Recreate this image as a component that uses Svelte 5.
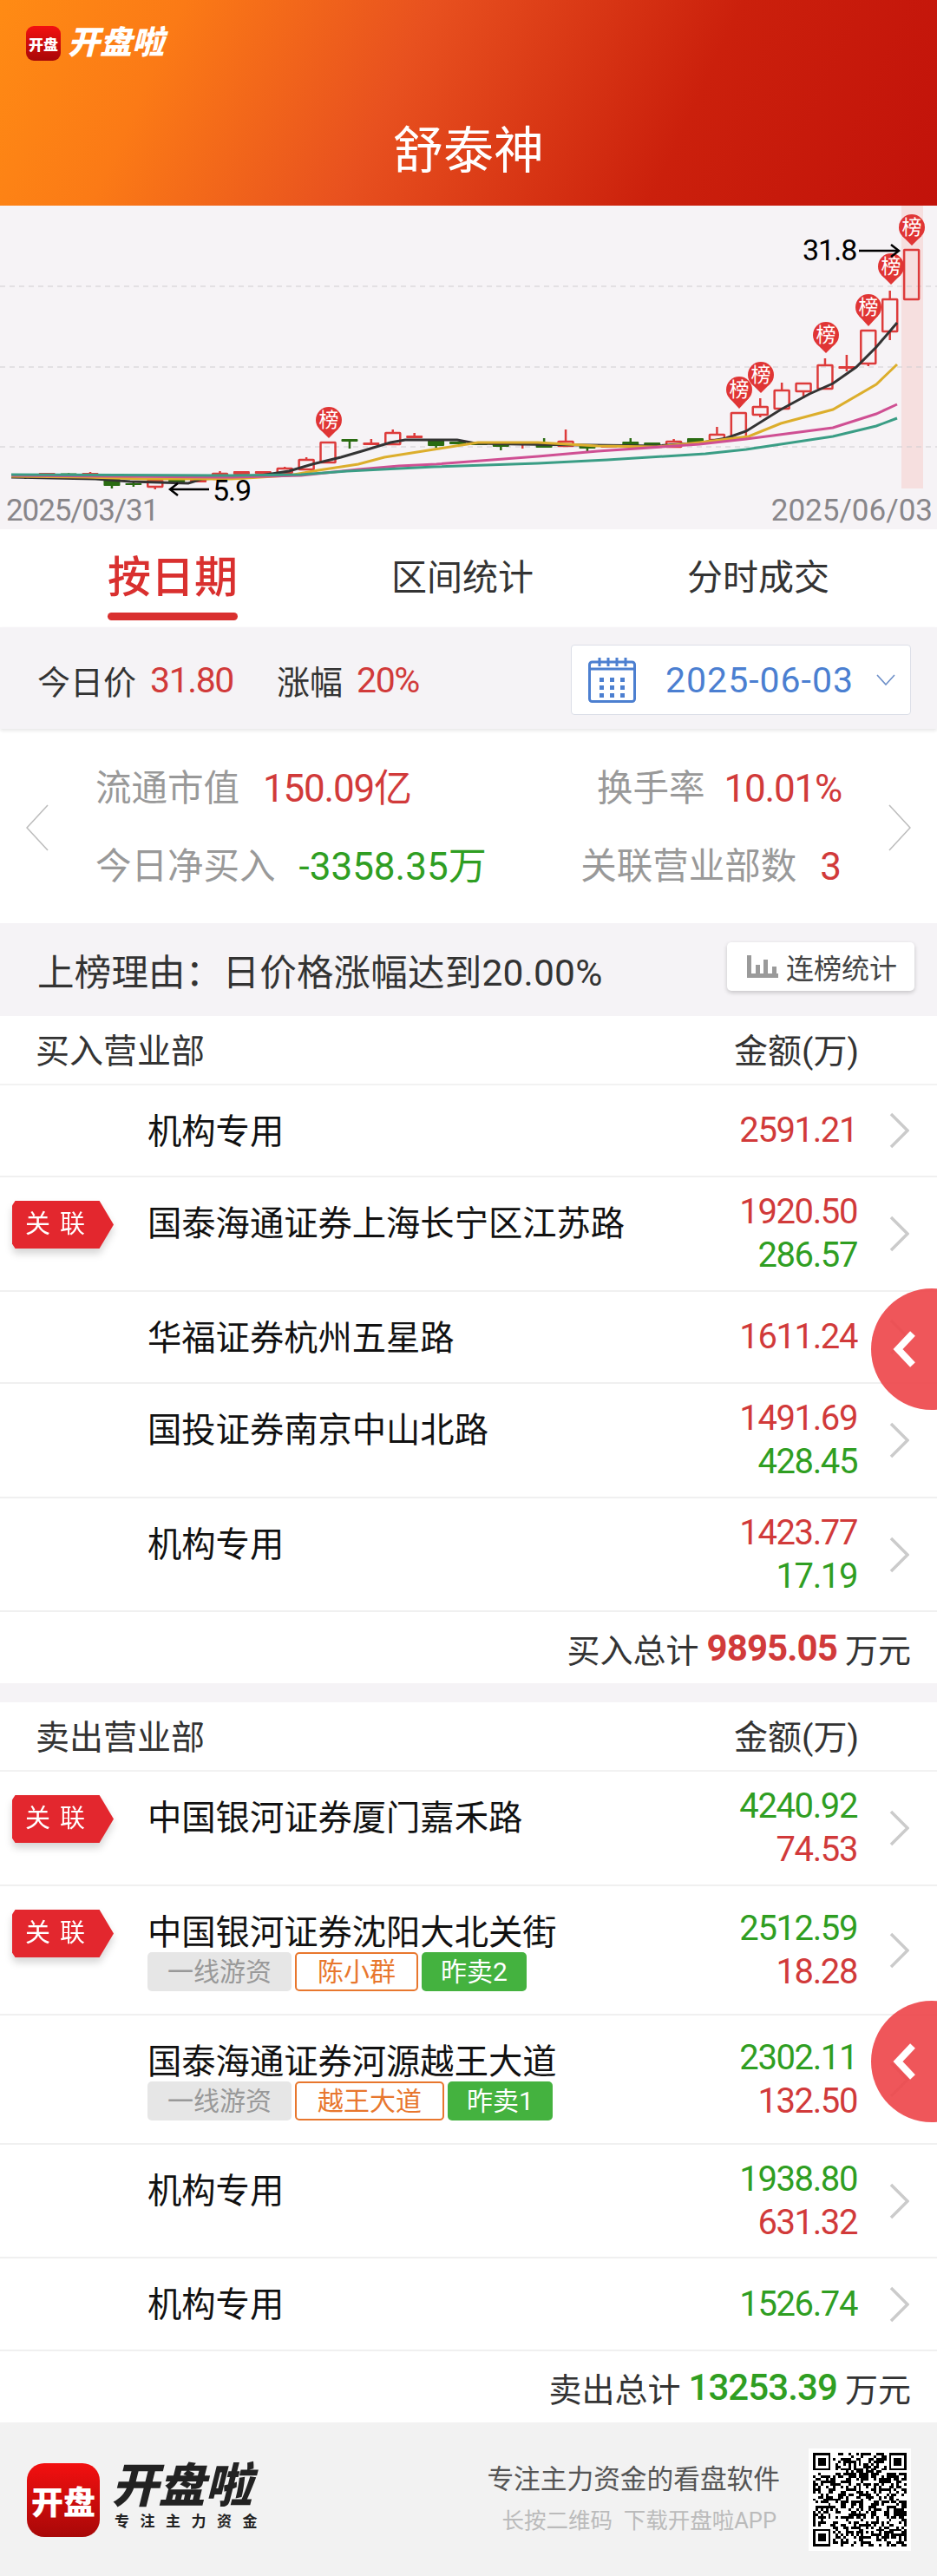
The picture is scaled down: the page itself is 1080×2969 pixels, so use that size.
<script>
  const R = '#dd3b3b', G = '#2a6b12';
  const cx = (n) => 29.3 + 24.91 * n;
  // n, bodyTop, bodyBottom, wickTop, wickBottom, up, hollow
  const candles = [
    [0,549,551,549,552,0,0],[1,545,551,545,551,1,0],[2,545.5,548.5,545,549,0,0],[3,545,550,544,550,1,0],
    [4,550,560,550,563,0,0],[5,557,559,555,561,0,0],[6,554,561,554,564,1,1],[7,552,556,552,556,0,0],
    [8,551,556,551,556,1,0],[9,546,552,543,552,1,1],[10,543,547,543,547,1,0],[11,543,546,543,548,1,0],
    [12,540,545,538,545,1,1],[13,530,541,527,541,1,1],[14,510,533,510,533,1,1],[15,506,509,506,517,0,0],
    [16,510,513,506,513,1,0],[17,499,512,495,512,1,1],[18,502,505,499,505,1,0],[19,507,514,506,516,0,0],
    [20,509,512,509,512,0,0],[21,509,513,509,513,0,0],[22,510,515,510,519,0,0],[23,511,513,511,517,1,0],
    [24,511,516,505,516,0,0],[25,509,514,495,514,1,1],[26,513,517,513,521,0,0],[27,512,516,512,516,1,0],
    [28,509,515,505,515,0,0],[29,510,515,510,515,0,0],[30,509,515,506,515,1,1],[31,505,511,505,513,0,0],
    [32,501,507,492,507,1,1],[33,476,505,476,505,1,1],[34,469,478,459,481,1,1],[35,450,471,441,471,1,1],
    [36,442,451,442,459,1,1],[37,421,448,413,448,1,1],[38,422,425,409,428,1,0],[39,381,419,381,422,1,1],
    [40,345,382,335,392,1,1],[41,288,345,288,345,1,1]
  ];
  const shift = -237;
  const pins = [[1051,262,283],[1027,307,328],[1001,354,376],[952,386,407],[877,432,453],[852,449,471],[379,484,505]];
  const pts = (a) => a.map(([x, y]) => `${x},${y + shift}`).join(' ');
  const black = pts([[13,550],[60,551],[110,552],[150,555],[217,557],[233,552],[300,548],[333,543],[360,535],[393,527],[417,520],[450,510],[467,507],[500,507],[527,507],[548,511],[600,512],[680,513],[757,514],[810,510],[837,505],[860,497],[900,472],[933,454],[960,442],[987,423],[1010,400],[1034,372]]);
  const gold = pts([[13,549],[100,550],[167,552],[267,552],[333,548],[367,542],[413,535],[443,527],[500,518],[551,510],[620,510],[689,514],[757,515],[806,510],[863,503],[900,488],[960,472],[1010,443],[1034,420]]);
  const pink = pts([[13,548],[267,550],[347,548],[413,541],[460,537],[503,535],[620,526],[689,520],[806,512],[860,506],[960,493],[1010,477],[1034,466]]);
  const teal = pts([[13,547],[267,548],[347,547],[400,543],[500,538],[620,534],[700,530],[813,523],[860,518],[960,503],[1010,491],[1034,482]]);

  const buy = [
    { name: '机构专用', h: 106, vals: [['2591.21','r']] },
    { name: '国泰海通证券上海长宁区江苏路', h: 132, rel: true, vals: [['1920.50','r'],['286.57','g']] },
    { name: '华福证券杭州五星路', h: 106, vals: [['1611.24','r']] },
    { name: '国投证券南京中山北路', h: 132, vals: [['1491.69','r'],['428.45','g']] },
    { name: '机构专用', h: 131, vals: [['1423.77','r'],['17.19','g']] }
  ];
  const sell = [
    { name: '中国银河证券厦门嘉禾路', h: 132, rel: true, vals: [['4240.92','g'],['74.53','r']] },
    { name: '中国银河证券沈阳大北关街', h: 149, rel: true, tags: ['陈小群','昨卖2'], vals: [['2512.59','g'],['18.28','r']] },
    { name: '国泰海通证券河源越王大道', h: 149, tags: ['越王大道','昨卖1'], vals: [['2302.11','g'],['132.50','r']] },
    { name: '机构专用', h: 131, vals: [['1938.80','g'],['631.32','r']] },
    { name: '机构专用', h: 107, vals: [['1526.74','g']] }
  ];

  // QR-like module matrix
  const N = 37;
  let seed = 48271;
  const rnd = () => { seed = (seed * 16807) % 2147483647; return seed / 2147483647; };
  let qr = '';
  const finder = (i, j) => {
    const r = N - 7;
    const inBox = (ox, oy) => i >= ox && i < ox + 7 && j >= oy && j < oy + 7;
    for (const [ox, oy] of [[0,0],[r,0],[0,r]]) {
      if (i >= ox - 1 && i <= ox + 7 && j >= oy - 1 && j <= oy + 7) {
        if (!inBox(ox, oy)) return 0;
        const a = i - ox, b = j - oy;
        return (a === 0 || a === 6 || b === 0 || b === 6 || (a >= 2 && a <= 4 && b >= 2 && b <= 4)) ? 1 : 0;
      }
    }
    return -1;
  };
  for (let j = 0; j < N; j++) for (let i = 0; i < N; i++) {
    const f = finder(i, j);
    if (f === 1 || (f === -1 && rnd() > 0.5)) qr += `M${i} ${j}h1v1h-1z`;
  }
</script>

{#snippet row(r)}
  <div class="row" class:two={r.vals.length > 1} style:height="{r.h}px">
    {#if r.rel}<div class="relwrap"><div class="rel">关联</div></div>{/if}
    <div class="main">
      <div class="name">{r.name}</div>
      {#if r.tags}
        <div class="tags">
          <span class="tag gray">一线游资</span>
          <span class="tag orange">{r.tags[0]}</span>
          <span class="tag green">{r.tags[1]}</span>
        </div>
      {/if}
    </div>
    <div class="vals">
      {#each r.vals as v}<div class={v[1]}>{v[0]}</div>{/each}
    </div>
    <svg class="chev" viewBox="0 0 23 42" width="23" height="42"><path d="M2 2 L21 21 L2 40" fill="none" stroke="#cbcbcb" stroke-width="3.5"/></svg>
  </div>
{/snippet}

<div class="page">
  <header class="hero">
    <div class="toplogo">
      <div class="appicon small">开盘</div>
      <div class="wordmark white">开盘啦</div>
    </div>
    <h1>舒泰神</h1>
  </header>

  <svg class="chart" viewBox="0 0 1080 373" width="1080" height="373">
    <rect x="1039" y="0" width="25" height="326" fill="#f6dfdf"/>
    {#each [330,423,515] as y}
      <line x1="0" x2="1080" y1={y+shift} y2={y+shift} stroke="#cfcdd0" stroke-width="1" stroke-dasharray="6 5"/>
    {/each}
    {#each candles as [n,t,b,wt,wb,up,hollow]}
      {@const c = up ? R : G}
      {#if wt < t}<line x1={cx(n)} x2={cx(n)} y1={wt+shift} y2={t+shift} stroke={c} stroke-width="2.5"/>{/if}
      {#if wb > b}<line x1={cx(n)} x2={cx(n)} y1={b+shift} y2={wb+shift} stroke={c} stroke-width="2.5"/>{/if}
      {#if hollow}
        <rect x={cx(n)-8.5} y={t+shift} width="17" height={b-t} fill="none" stroke={c} stroke-width="2.5" rx="0.5"/>
      {:else}
        <rect x={cx(n)-9.5} y={t+shift} width="19" height={b-t} fill={c} rx="1"/>
      {/if}
    {/each}
    <polyline points={black} fill="none" stroke="#333" stroke-width="3"/>
    <polyline points={gold} fill="none" stroke="#dcae2c" stroke-width="3"/>
    <polyline points={pink} fill="none" stroke="#cf4f93" stroke-width="3"/>
    <polyline points={teal} fill="none" stroke="#3a9d85" stroke-width="3"/>
    {#each pins as [x,y,tip]}
      <circle cx={x} cy={y+shift} r="15" fill="#e03535"/>
      <polygon points="{x-11},{y+shift+10} {x},{tip+shift} {x+11},{y+shift+10}" fill="#e03535"/>
      <text x={x} y={y+shift+8} class="pintext" text-anchor="middle">榜</text>
    {/each}
    <text x="925" y={300+shift} class="lbl">31.8</text>
    <g fill="none" stroke="#000" stroke-width="2.5">
      <line x1="990" x2="1035" y1={289+shift} y2={289+shift}/>
      <path d="M1027 {282+shift} L1036 {289+shift} L1027 {296+shift}"/>
      <line x1="197" x2="241" y1={564+shift} y2={564+shift}/>
      <path d="M205 {557+shift} L196 {564+shift} L205 {571+shift}"/>
    </g>
    <text x="245" y={577+shift} class="lbl">5.9</text>
    <text x="7" y={600+shift} class="date narrow">2025/03/31</text>
    <text x="1075" y={600+shift} class="date" text-anchor="end">2025/06/03</text>
  </svg>

  <nav class="tabs">
    <div class="tab active">按日期</div>
    <div class="tab">区间统计</div>
    <div class="tab">分时成交</div>
  </nav>

  <section class="price">
    <span class="pl">今日价</span><span class="pv r">31.80</span>
    <span class="pl second">涨幅</span><span class="pv r">20%</span>
    <div class="datebox">
      <svg viewBox="0 0 55 53" width="55" height="53" fill="none" stroke="#4c7fd0">
        <rect x="1.5" y="6" width="52" height="45.5" rx="3" stroke-width="3"/>
        <line x1="1.5" x2="53.5" y1="14" y2="14" stroke-width="3"/>
        <path d="M13 1v10M23 1v10M33 1v10M43 1v10" stroke-width="3"/>
        <path d="M13 24h5v5h-5zM25 24h5v5h-5zM37 24h5v5h-5zM13 33h5v5h-5zM25 33h5v5h-5zM37 33h5v5h-5zM13 42h5v5h-5zM25 42h5v5h-5zM37 42h5v5h-5z" fill="#4c7fd0" stroke="none"/>
      </svg>
      <span class="dtext">2025-06-03</span>
      <svg class="dchev" viewBox="0 0 22 13" width="22" height="13"><path d="M1 1 L11 12 L21 1" fill="none" stroke="#6d8fc8" stroke-width="1.6"/></svg>
    </div>
  </section>

  <section class="stats">
    <svg viewBox="0 0 26 54" width="26" height="54"><path d="M25 1 L1 27 L25 53" fill="none" stroke="#bdbdbd" stroke-width="1.6"/></svg>
    <div class="statgrid">
      <div class="sr">
        <div class="s"><span class="sl">流通市值</span><span class="sv r tight">150.09亿</span></div>
        <div class="s near"><span class="sl">换手率</span><span class="sv r tight">10.01%</span></div>
      </div>
      <div class="sr">
        <div class="s"><span class="sl">今日净买入</span><span class="sv g">-3358.35万</span></div>
        <div class="s"><span class="sl">关联营业部数</span><span class="sv r">3</span></div>
      </div>
    </div>
    <svg viewBox="0 0 26 54" width="26" height="54"><path d="M1 1 L25 27 L1 53" fill="none" stroke="#bdbdbd" stroke-width="1.6"/></svg>
  </section>

  <section class="reason">
    <span class="rtext">上榜理由：日价格涨幅达到20.00%</span>
    <button class="lb">
      <svg viewBox="0 0 36 26" width="36" height="26"><path d="M0 0h5v26h-5zM0 21h36v5h-36zM10 11h5v12h-5zM19 5h5v18h-5zM29 13h5v10h-5z" fill="#9a9a9a"/></svg>
      <span>连榜统计</span>
    </button>
  </section>

  <div class="thead"><span>买入营业部</span><span class="amt">金额(万)</span></div>
  {#each buy as r}{@render row(r)}{/each}
  <div class="total buy"><span>买入总计</span><b class="r">9895.05</b><span>万元</span></div>
  <div class="gap"></div>

  <div class="thead"><span>卖出营业部</span><span class="amt">金额(万)</span></div>
  {#each sell as r}{@render row(r)}{/each}
  <div class="total sell"><span>卖出总计</span><b class="g">13253.39</b><span>万元</span></div>

  <footer>
    <div class="appicon big">开盘</div>
    <div class="fbrand">
      <div class="wordmark dark">开盘啦</div>
      <div class="slogan">专注主力资金</div>
    </div>
    <div class="ftext">
      <div class="f1">专注主力资金的看盘软件</div>
      <div class="f2">长按二维码&nbsp;&nbsp;下载开盘啦APP</div>
    </div>
    <div class="qr">
      <svg viewBox="0 0 37 37" width="108" height="108" shape-rendering="crispEdges"><path d={qr} fill="#000"/></svg>
    </div>
  </footer>

  <div class="float f-a"><svg viewBox="0 0 28 42" width="28" height="42"><path d="M23 3 L6 21 L23 39" fill="none" stroke="#fff" stroke-width="8"/></svg></div>
  <div class="float f-b"><svg viewBox="0 0 28 42" width="28" height="42"><path d="M23 3 L6 21 L23 39" fill="none" stroke="#fff" stroke-width="8"/></svg></div>
</div>

<style>
  :global(body) { margin: 0; background: #fff; }
  .page {
    position: relative; width: 1080px; height: 2969px; overflow: hidden; background: #fff;
    font-family: Roboto, "Noto Sans CJK SC", sans-serif; color: #333;
  }
  .r { color: #d13a3a; }
  .g { color: #2f9e22; }

  .hero {
    height: 237px; box-sizing: border-box; padding: 30px 0 0 30px;
    background: linear-gradient(115deg, #ff8b14 0%, #fb7a16 18%, #e8511f 42%, #cb200c 72%, #c2120a 100%);
  }
  .toplogo { display: flex; align-items: center; gap: 6px; height: 40px; }
  .hero h1 {
    margin: 69px 30px 0 0; font-size: 58px; line-height: 70px; font-weight: 400; color: #fff; text-align: center;
  }
  .appicon {
    display: flex; align-items: center; justify-content: center; color: #fff; font-weight: 900;
    background: linear-gradient(180deg, #f31010, #a80808); flex: none;
  }
  .appicon.small { width: 40px; height: 40px; border-radius: 9px; font-size: 17px; }
  .appicon.big { width: 84px; height: 85px; border-radius: 20px; font-size: 37px; }
  .wordmark { font-weight: 900; transform: skewX(-14deg); transform-origin: left bottom; white-space: nowrap; }
  .wordmark.white { color: #fff; font-size: 37px; line-height: 40px; }
  .wordmark.dark { color: #222; font-size: 54px; line-height: 56px; margin-left: -6px; margin-top: 4px; }

  .chart { display: block; background: #f6f3f6; }
  .pintext { font-size: 23px; fill: #fff; font-family: "Noto Sans CJK SC", sans-serif; }
  .lbl { font-size: 34px; letter-spacing: -1px; fill: #000; font-family: Roboto, sans-serif; }
  .date { font-size: 35px; fill: #88868a; font-family: Roboto, sans-serif; }
  .date.narrow { letter-spacing: -1.1px; }

  .tabs { display: flex; gap: 177px; height: 113px; padding-left: 124px; background: #fff; line-height: 113px; }
  .tab { position: relative; font-size: 41px; color: #333; white-space: nowrap; }
  .tab.active { font-size: 50px; color: #d9302f; font-weight: 500; }
  .tab.active::after {
    content: ""; position: absolute; left: 0; right: 0; bottom: 8px; height: 9px; border-radius: 5px; background: #d9302f;
  }

  .price {
    position: relative; display: flex; align-items: center; height: 117px; box-sizing: border-box;
    padding: 4px 30px 0 43px; background: #f5f3f6; box-shadow: 0 2px 4px rgba(0,0,0,.1);
  }
  .pl { font-size: 38px; color: #333; }
  .pl.second { margin-left: 50px; }
  .pv { font-size: 41px; letter-spacing: -1.4px; margin-left: 16px; }
  .datebox {
    display: flex; align-items: center; margin-left: auto; width: 392px; height: 81px; box-sizing: border-box;
    padding-left: 19px; background: #fff; border: 1px solid #dcdfe8; border-radius: 4px;
  }
  .dtext { margin-left: 34px; font-size: 41px; letter-spacing: 1px; color: #4b7fd1; }
  .dchev { margin-left: 26px; }

  .stats { display: flex; align-items: center; height: 224px; box-sizing: border-box; padding: 3px 30px 0; background: #fff; }
  .statgrid { flex: 1; display: flex; flex-direction: column; gap: 40px; padding: 0 54px; }
  .sr { display: flex; justify-content: space-between; line-height: 50px; }
  .s { display: flex; gap: 27px; white-space: nowrap; }
  .s.near { gap: 22px; }
  .sl { font-size: 41.5px; color: #999; }
  .sv { font-size: 44px; }
  .sv.tight { letter-spacing: -1.2px; }

  .reason {
    display: flex; align-items: center; justify-content: space-between; height: 107px; box-sizing: border-box;
    padding: 0 26px 0 43px; background: #f5f3f6;
  }
  .rtext { font-size: 42.5px; letter-spacing: .2px; color: #333; white-space: nowrap; }
  .lb {
    display: flex; align-items: center; gap: 9px; width: 216px; height: 56px; margin-top: -8px; padding: 0 0 0 23px;
    border: 0; border-radius: 5px; background: #fff; box-shadow: 0 2px 5px rgba(0,0,0,.2);
    font: inherit; font-size: 32px; color: #444; white-space: nowrap;
  }

  .thead {
    display: flex; justify-content: space-between; align-items: center; height: 80px; box-sizing: border-box;
    padding: 0 90px 5px 41px; font-size: 39px; color: #333; border-bottom: 2px solid #f2f2f2;
  }

  .row {
    position: relative; display: flex; align-items: center; box-sizing: border-box;
    padding: 0 32px 0 170px; border-bottom: 2px solid #f0f0f0;
  }
  .main { flex: 1; min-width: 0; padding-top: 3px; }
  .row.two .main { align-self: flex-start; padding-top: 29px; }
  .name { font-size: 39.3px; line-height: 50px; color: #111; white-space: nowrap; }
  .vals { font-size: 40px; letter-spacing: -1.4px; line-height: 50px; text-align: right; }
  .chev { margin-left: 37px; flex: none; }
  .relwrap { position: absolute; left: 14px; top: 27px; filter: drop-shadow(0 6px 4px rgba(0,0,0,.16)); }
  .rel {
    width: 117px; height: 55px; box-sizing: border-box; padding-left: 15px;
    background: #e3272e; color: #fff; font-size: 29px; line-height: 55px; letter-spacing: 11px; white-space: nowrap;
    clip-path: polygon(3% 0, 86% 0, 100% 50%, 86% 100%, 3% 100%, 0 90%, 0 10%);
  }
  .tags { display: flex; gap: 4px; margin-top: -3px; }
  .tag {
    box-sizing: border-box; height: 45px; line-height: 45px; font-size: 30px; border-radius: 5px; white-space: nowrap; padding: 0 24px;
  }
  .tag.gray { background: #e6e6e6; color: #999; padding: 0 23px; }
  .tag.orange { border: 2px solid #e8772e; color: #e8772e; line-height: 41px; }
  .tag.green { background: #44b23f; color: #fff; padding: 0 22px; }

  .total {
    display: flex; justify-content: flex-end; align-items: center; gap: 9px; height: 82px;
    padding-right: 30px; font-size: 38px; color: #333;
  }
  .total b { font-size: 42px; letter-spacing: -.9px; font-weight: 700; }
  .total.sell b { font-weight: 500; }
  .gap { height: 22px; background: #f5f3f6; }

  footer {
    display: flex; align-items: flex-start; height: 179px; box-sizing: border-box; padding: 47px 30px 0 31px; background: #f2f2f2;
  }
  .fbrand { margin-left: 17px; margin-top: -5px; }
  .slogan { margin-top: 2px; font-size: 17px; line-height: 20px; letter-spacing: 12.5px; font-weight: 700; color: #222; white-space: nowrap; }
  .ftext { margin-left: auto; margin-right: 33px; margin-top: -3px; text-align: right; }
  .f1 { font-size: 30.7px; line-height: 44px; color: #555; white-space: nowrap; }
  .f2 { margin: 5px 4px 0 0; font-size: 25.5px; line-height: 40px; color: #bbb; white-space: nowrap; }
  .qr {
    display: flex; align-items: center; justify-content: center; width: 118px; height: 118px; margin-top: -17px; background: #fff;
  }

  .float {
    position: absolute; right: -64px; width: 140px; height: 140px; box-sizing: border-box; padding-left: 25px;
    display: flex; align-items: center; border-radius: 50%; background: rgba(238, 72, 76, .92);
  }
  .f-a { top: 1485px; }
  .f-b { top: 2306px; }
</style>
